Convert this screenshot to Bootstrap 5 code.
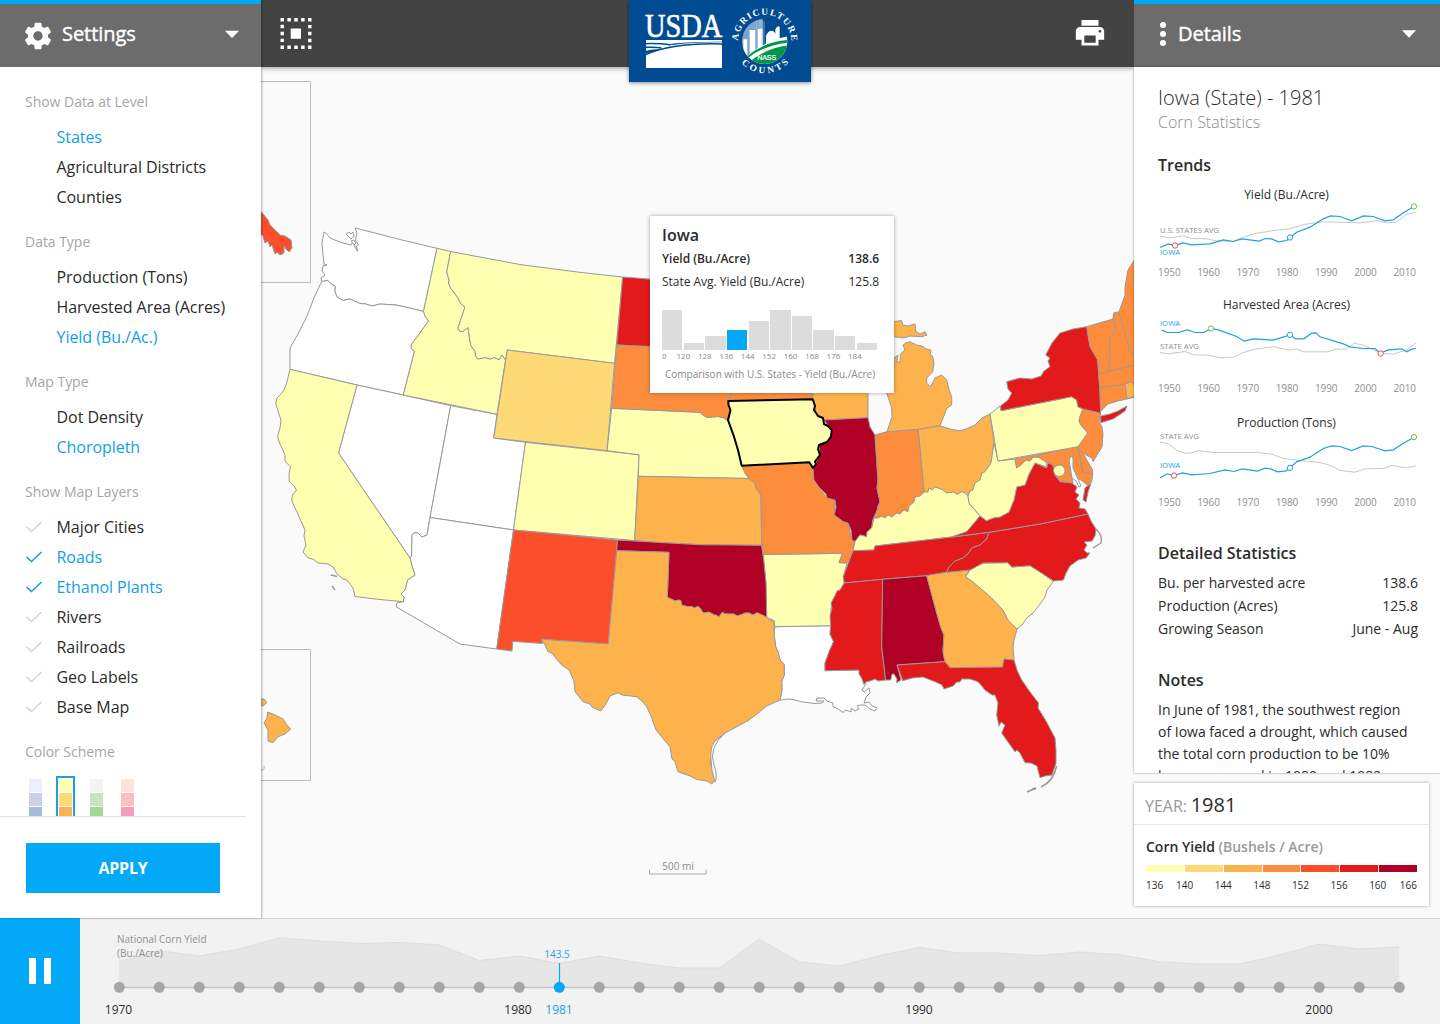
<!DOCTYPE html>
<html lang="en">
<head>
<meta charset="utf-8">
<title>USDA Corn Yield Explorer</title>
<link href="https://cdn.jsdelivr.net/npm/bootstrap@5.3.0/dist/css/bootstrap.min.css" rel="stylesheet">
<style>
:root{--sky:#03a9f6;--ink:#2b2b2b}
body{font-family:"Open Sans","Noto Sans",sans-serif;font-size:14px;color:var(--ink);background:#fafafa}
.app-shell{width:1440px;height:1024px}
.stage{height:918px}
.side-left{width:261px;z-index:3;box-shadow:1px 0 2px rgba(0,0,0,.3)}
.side-right{width:306px;z-index:3}
.panel-head{height:67px;background:#6c6c6c;border-top:4px solid var(--sky);color:#fff;font-size:20px;padding:0 22px}
.side-right .panel-head{padding:0 24px 0 26px}
.panel-title{line-height:30px;-webkit-text-stroke:.4px #fff;letter-spacing:-.05px}
.side-right .panel-title{margin-left:11px}
.left-body{padding:15px 0 0 25px;flex:1 1 0;min-height:0}
.opt-head{height:40px;line-height:40px;color:#a6a6a6;font-size:14px;letter-spacing:-.03px}
.opt-list{margin-bottom:10px}
.opt-list li{height:30px;line-height:30px;font-size:16px;letter-spacing:-.04px}
.opt-list .chk{width:31.5px}
.chk svg{display:block}
.is-on{color:#0fa0ec}
.swatches{gap:11.6px;padding:4px 0 0 1px}
.swatch{width:19px;height:60px;border:2px solid transparent;padding:1px;gap:1px}
.swatch.is-picked{border-color:#1b9fe0;margin:0 .6px 0 -.6px}
.swatch i{height:13px;flex:none}
.apply-wrap{width:246px;height:102px;border-top:1px solid #e2e2e2;padding:26px 26px 0}
.btn-apply{width:194px;height:50px;background:var(--sky);color:#fff;font-weight:700;font-size:16px;letter-spacing:-.2px;border-radius:0}
.topbar{height:67px;background:#434343;box-shadow:0 1px 5px rgba(0,0,0,.4);z-index:2;padding:0 27px 0 18.5px}
.brand{left:368px;top:0;width:182px;height:82px;background:#004b91;box-shadow:0 1px 4px rgba(0,0,0,.45)}
.map-pane{flex:1 1 0;min-height:0}
.map-svg{display:block}
.tip{left:388.5px;top:216px;width:244.500px;height:177px;background:#fff;box-shadow:0 0 4px rgba(0,0,0,.35);padding:7px 15px 0 12.5px;z-index:2;font-size:12px}
.tip-title{font-size:16px;font-weight:600;line-height:24px}
.tip-row{line-height:23px;letter-spacing:-.02px}
.bars{height:40px;margin-top:17px;gap:1.2px;width:215px}
.bars i{flex:1 1 0;background:#dcdcdc}
.bars i.hot{background:var(--sky)}
.bar-labels{font-size:8px;line-height:12px;color:#8a8a8a;width:214px}
.bar-labels span{width:21.45px;text-align:center}
.bar-labels span:first-child{width:10.7px;text-align:left}
.tip-note{font-size:10px;color:#8a8a8a;line-height:14px;margin-top:5px;padding-left:3px}
.right-card{height:706px;background:#fff;padding:18px 22px 0 24px;box-shadow:0 0 2px rgba(0,0,0,.45);overflow:hidden}
.det-title{font-size:20px;font-weight:300;line-height:26px}
.det-sub{font-size:16px;font-weight:300;line-height:22px;color:#8c8c8c;margin-bottom:20px}
.sec-head{font-size:16px;font-weight:600;line-height:24px}
.sec-gap{margin-top:29px;margin-bottom:6px}
.notes-gap{margin-top:28px;margin-bottom:7px}
.trend-title{font-size:12px;line-height:20px;text-align:center;padding-right:3px}
.trend svg{display:block;overflow:visible}
.trend-a{margin-top:7.5px}
.trend-b{margin-top:12.5px}
.trend-c{margin-top:14.5px}
.trend-axis{font-size:10px;line-height:20px;color:#8f8f8f;letter-spacing:-.08px;padding-right:2px}
.trend text{font-size:23.5px;letter-spacing:-.2px}
.stat-row{line-height:23px}
.note-copy{line-height:22px;white-space:nowrap;letter-spacing:-.01px}
.legend-card{width:295px;height:123px;margin:10px 0 0 0;background:#fff;box-shadow:0 0 3px rgba(0,0,0,.35)}
.yr-head{height:42px;border-bottom:1px solid #e6e6e6;padding-left:11px;line-height:44px}
.yr-head .tag{font-size:16px;color:#999}
.yr-head .num{font-size:20px}
.legend-body{padding:12px 12px 0 12px}
.legend-name{line-height:20px}
.legend-unit{color:#999}
.ramp{height:7px;gap:1px}
.ramp i{flex:1 1 0}
.ramp-labels{font-size:10px;line-height:16px;margin-top:5px}
.ramp-labels span{width:38.7px;text-align:center}
.ramp-labels span:first-child{width:19.4px;text-align:left}
.ramp-labels span:last-child{width:20px;text-align:right;direction:rtl}
.timeline{height:106px;background:#f2f2f2;z-index:1}
.tl-body{border-top:1px solid #d5d5d5;width:1360px}
.pause{width:80px;background:var(--sky);border:0;gap:7.5px;padding:0}
.pause i{width:7.5px;height:26px;background:#fff}
</style>
<script src="https://cdn.jsdelivr.net/npm/bootstrap@5.3.0/dist/js/bootstrap.bundle.min.js"></script>
</head>
<body>
<div class="app-shell d-flex flex-column overflow-hidden">
<div class="stage d-flex">

<aside class="side-left bg-white d-flex flex-column position-relative">
  <div class="panel-head d-flex align-items-center">
    <svg width="32" height="32" viewBox="0 0 24 24" fill="#fff"><path d="M19.43 12.98c.04-.32.07-.64.07-.98s-.03-.66-.07-.98l2.11-1.65c.19-.15.24-.42.12-.64l-2-3.46c-.12-.22-.39-.3-.61-.22l-2.49 1c-.52-.4-1.08-.73-1.69-.98l-.38-2.65C14.46 2.18 14.25 2 14 2h-4c-.25 0-.46.18-.49.42l-.38 2.65c-.61.25-1.17.59-1.69.98l-2.49-1c-.23-.09-.49 0-.61.22l-2 3.46c-.13.22-.07.49.12.64l2.11 1.65c-.04.32-.07.65-.07.98s.03.66.07.98l-2.11 1.65c-.19.15-.24.42-.12.64l2 3.46c.12.22.39.3.61.22l2.49-1c.52.4 1.08.73 1.69.98l.38 2.65c.03.24.24.42.49.42h4c.25 0 .46-.18.49-.42l.38-2.65c.61-.25 1.17-.59 1.69-.98l2.49 1c.23.09.49 0 .61-.22l2-3.46c.12-.22.07-.49-.12-.64l-2.11-1.65zM12 15.5c-1.93 0-3.5-1.57-3.5-3.5s1.57-3.5 3.5-3.5 3.5 1.57 3.5 3.5-1.57 3.5-3.5 3.5z"/></svg>
    <span class="panel-title ms-2 mb-1">Settings</span>
    <svg class="ms-auto mb-1" width="14" height="8" viewBox="0 0 14 8"><path d="M0 .8h14L7 8z" fill="#fff"/></svg>
  </div>
  <div class="left-body overflow-hidden">
    <div class="opt-head">Show Data at Level</div>
    <ul class="opt-list list-unstyled">
      <li class="d-flex is-on"><span class="chk"></span>States</li>
      <li class="d-flex"><span class="chk"></span>Agricultural Districts</li>
      <li class="d-flex"><span class="chk"></span>Counties</li>
    </ul>
    <div class="opt-head">Data Type</div>
    <ul class="opt-list list-unstyled">
      <li class="d-flex"><span class="chk"></span>Production (Tons)</li>
      <li class="d-flex"><span class="chk"></span>Harvested Area (Acres)</li>
      <li class="d-flex is-on"><span class="chk"></span>Yield (Bu./Ac.)</li>
    </ul>
    <div class="opt-head">Map Type</div>
    <ul class="opt-list list-unstyled">
      <li class="d-flex"><span class="chk"></span>Dot Density</li>
      <li class="d-flex is-on"><span class="chk"></span>Choropleth</li>
    </ul>
    <div class="opt-head">Show Map Layers</div>
    <ul class="opt-list list-unstyled" id="layers"></ul>
    <div class="opt-head">Color Scheme</div>
    <div class="swatches d-flex">
      <div class="swatch d-flex flex-column"><i style="background:#edf0fc"></i><i style="background:#ccd0e6"></i><i style="background:#a3bbd6"></i></div>
      <div class="swatch d-flex flex-column is-picked"><i style="background:#ffffb2"></i><i style="background:#fed976"></i><i style="background:#feb24c"></i></div>
      <div class="swatch d-flex flex-column"><i style="background:#edf7ea"></i><i style="background:#c3e6bd"></i><i style="background:#9fd899"></i></div>
      <div class="swatch d-flex flex-column"><i style="background:#fde4da"></i><i style="background:#fabfbf"></i><i style="background:#f79db6"></i></div>
    </div>
  </div>
  <div class="apply-wrap"><button class="btn btn-apply p-0">APPLY</button></div>
</aside>

<main class="d-flex flex-column flex-grow-1 position-relative">
  <div class="topbar d-flex align-items-center position-relative">
    <svg width="32" height="32" viewBox="0 0 32 32"><path d="M2.200 1.700h27.600v27.600H2.200z" fill="none" stroke="#fff" stroke-width="3.400" stroke-dasharray="3.450" stroke-dashoffset="1.720"/><path d="M10.700 10.500h10.300v10.300H10.700z" fill="#fff"/></svg>
    <svg class="ms-auto mb-1" width="34" height="34" viewBox="0 0 24 24" fill="#fff"><path d="M19 8.500H5c-1.66 0-3 1.34-3 3v6h4v4h12v-4h4v-6c0-1.66-1.34-3-3-3zm-3 11H8v-5h8v5zm3-7c-.55 0-1-.45-1-1s.45-1 1-1 1 .45 1 1-.45 1-1 1zm-1-9H6v4h12V3.500z"/></svg>
    <div class="brand position-absolute">
      <svg class="d-block" width="182" height="82" viewBox="87 0 546 246">
        <defs><path id="arcTop" d="M414 124a80 80 0 0 1 160 0"/><path id="arcBot" d="M398 124a96 96 0 0 0 192 0"/><clipPath id="disc"><circle cx="494" cy="124" r="68"/></clipPath></defs>
        <text x="135" y="110" font-family="Liberation Serif" font-size="104" fill="#fff" stroke="#fff" stroke-width="2" textLength="232" lengthAdjust="spacingAndGlyphs">USDA</text>
        <path d="M138 120h228v84H138z" fill="#fff"/>
        <path d="M138 131q44-1 74 4M138 142q24-1 46 1M138 164q80-36 228-32" fill="none" stroke="#004b91" stroke-width="4.500"/>
        <path d="M138 152q24-5 46-4l-46 13zM200 133q60-9 166-8v2q-90-1-146 8z" fill="#004b91"/>
        <g clip-path="url(#disc)">
          <path d="M426 56h136v136H426z" fill="#004b91"/>
          <path d="M426 56h62v136h-62z" fill="#7ea3cc"/>
          <path d="M430 118h12v60h-12zM449 90h17v90h-17zM473 86h15v80h-15zM498 108q4-14 16-16q10 1 12 10v-14q6-12 13-8v56l-41 10z" fill="#fff"/>
          <path d="M486 60v80M492 64v70M480 60v26M470 64v22" stroke="#b5cbe2" stroke-width="2"/>
          <path d="M430 178q60-56 140-70v90H430z" fill="#fff"/>
          <path d="M440 170q50-44 122-50v8q-70 8-118 46zM452 182q46-36 112-46v60H452z" fill="#00964b"/>
          <text x="500" y="181" font-family="Liberation Sans" font-size="21" fill="#fff" stroke="#fff" stroke-width=".6" text-anchor="middle">NASS</text>
        </g>
        <g font-family="Liberation Serif" font-weight="700" font-size="28" fill="#fff">
          <text><textPath href="#arcTop" startOffset="2" textLength="248">AGRICULTURE</textPath></text>
          <text><textPath href="#arcBot" startOffset="72" textLength="160">COUNTS</textPath></text>
        </g>
      </svg>
    </div>
  </div>
  <div class="map-pane">
    <svg class="map-svg" width="873" height="851" viewBox="261 67 873 851" stroke="#999" stroke-width="1" stroke-linejoin="round" id="map">
      <g fill="none" stroke="#bbb"><path d="M250 81.500H310.500V282.500H250M250 649.500H310.500V780.500H250"/><path d="M261 770q4 1 3-4" /></g>
      <path fill="#fc4e2a" d="M258 208L264 215 268 220 270 225 275 230 280 235 285 236 291 240 292 248 289 252 286 249 284 246 284 253 280 255 277 252 275 254 272 245 270 247 268 241 265 243 263 236 258 232z"/>
      <g fill="#feb24c"><path d="M267.700 712L275 715 283 719 287 725 290.700 729 285 734 278 736.700 273 742.700 268 741 268 730 264 723 267 718z"/><path d="M259 699L264 699 266.700 702.700 263 706 259 705z"/></g>
      <!-- West -->
      <g fill="#fff">
        <path d="M324 232L326 233 330 238 341 242.500 351 245 353 242 355 247 357.500 251.500 356.500 246 358.500 245 355.500 240 357 233 355 228 375 233 400 239.500 437 248.300 423.500 311.500 410 308 396 305 380 304 372 306 366 304 360 303.500 350 299 343 300.500 337 297 335 292 335 286 331 284 328 280.500 322 281.500 321 278 325 275 322 271 323 266 327 265 324 264 323 255 322 243 323 237z"/>
        <path d="M346 234L349 232 351 234 353 232 354 236 351 239 349 237zM351 241L354 240 356 243 354 245z"/>
        <path d="M322 281.500L328 280.500 331 284 335 286 335 292 337 297 343 300.500 350 299 360 303.500 366 304 372 306 380 304 396 305 410 308 423.500 311.500 425 316 428.500 321 422 330 417 337 411 345 411.500 349 414.500 351 403.300 395 357 385 290 369.300 290 348 298 334 307 316 314 298 320 285z"/>
        <path d="M357 385L403.300 395 450.700 405.700 430 517.500 427 535 422 537 418 533 414 532.700 412 535 411.500 556 410 558 338.500 453z"/>
        <path d="M450.700 405.700L497 414.300 493.700 438 525.500 442.300 513.500 530 430 517.500z"/>
        <path d="M430 517.500L513.500 530 496.700 649 460 644 396 606.700 397 603 403.300 601.700 404 597 401 594 405 590 407.500 580 415 575 412 566 410 558 411.500 556 412 535 414 532.700 418 533 422 537 427 535z"/>
        <path d="M775 626.700L830.700 625.700 830 634 833.500 641.700 829 652 825 663 825 670.700 859 670 861.700 678 866 684 862 690 864 692 869 688 870 693 866 697 864 703 869 702 872 706 877 708 875 711 870 709 865 705 860 705 857 706 859 709 855 711 851 708 851 712 846 710 843 712.500 838 709 833 706.700 833 703 827 701 824 698 817 698 816 701 824 701 822 703 815 703.500 803 702 790 699 780 700 782 690 781.700 681.700 784.300 675 784.300 665 780 660 775.700 646.700 774 634z"/>
      </g>
      <g fill="#ffffb2">
        <path d="M437 248.300L450.700 251.500 446.700 272 449 280 448.500 283 450.500 288 453 291 458 298 461 304 465 307 458 328 460 331.500 463 331.500 468 327.500 469.500 338 471 346 475 351 475.500 356 478 359 485 357.500 490 359 494 357.500 499 359.500 502 355 505.500 360 497 414.300 403.300 395 414.500 351 411.500 349 411 345 417 337 422 330 428.500 321 425 316 423.500 311.500z"/>
        <path d="M450.700 251.500L485 258 520 264.500 560 269.800 590 273.500 622.700 277 614.500 363.300 507.300 350 505.500 360 502 355 499 359.500 494 357.500 490 359 485 357.500 478 359 475.500 356 475 351 471 346 469.500 338 468 327.500 463 331.500 460 331.500 458 328 465 307 461 304 458 298 453 291 450.500 288 448.500 283 449 280 446.700 272z"/>
        <path d="M290 369.300L357 385 338.500 453 410 558 412 566 415 575 407.500 580 405 590 401 594 404 597 403.300 601.700 380 599.500 355 596.500 353 588 347 580 343 579 337 574 333 567 328 564 318 563 313 559 308 558 303 552 306 545 304 536 305 530 300 519 297 512 294 506 291.700 500 292.500 495 296.500 490 294 486 289.300 481.700 289 474 290.500 467 285 461 285 455 280 444 277.500 436.700 280 428 281 420 278 411 275.700 403.300 277 398 280 395 284 390 286.700 383z"/>
        <path d="M525.500 442.300L639 454.700 634.700 540.500 513.500 530z"/>
        <path d="M611.700 408.300L660 410.500 700 412.300 703 415 706.700 417.500 718 416.500 724 418 728 421 734 436.700 738 450 741.700 465.700 745 473 749 478.500 638.300 476.300 639 454.700 607 450.700z"/>
        <path d="M763.500 554.500L842.700 553.300 839 562.700 847 563 843.300 576.700 844.300 583 840 590 834.300 597 831 608 830.700 625.700 775 626.700 774 620.700 766.700 617.300 766 583 764 563z"/>
      </g>
      <path d="M331 575l6 1.500M332 586l3 4" fill="none" stroke-width="1.400"/>
      <path fill="#fed976" d="M507.300 350L614.500 363.300 607 450.700 493.700 438z"/>
      <path fill="#fc4e2a" d="M513.500 530L617.500 540 616.700 550.700 608.300 644 541.700 639.300 542.500 643.500 512.700 641.300 512 651 496.700 649z"/>
      <!-- Plains -->
      <path fill="#e31a1c" d="M622.700 277L700 283V350L616.700 345z"/>
      <path fill="#fd8d3c" d="M616.700 345L731 350 731.700 393 728.300 401 730.500 410 728 421 724 418 718 416.500 706.700 417.500 703 415 700 412.300 660 410.500 611.700 408.300z"/>
      <path fill="#fd8d3c" d="M731.700 350H812V399.300L728.300 401 731.700 393z"/>
      <path fill="#feb24c" d="M638.300 476.300L749 478.500 755 483 756 488 761 495 761.700 545.300 700 544.700 660 542.500 634.700 540.500z"/>
      <path fill="#b10026" d="M617.500 540L660 542.500 700 544.700 761.700 545.300 764 563 766 583 766.700 617.300 762 615 757 612.700 753 615 749 613 745 613 742 614.500 737 616 734 614 730 614 726 614 722 612.500 719 617 716 615 714 615 711 613 708 612 705 613 703 612.500 700 608 698 606.500 694 608 692 606.500 687 606.500 681.700 605 681 601 679 600 675 601 672 599.500 667.300 597.300 669 552.300 616.700 550.700z"/>
      <path fill="#feb24c" d="M616.700 550.700L669 552.300 667.300 597.300 672 599.500 675 601 679 600 681 601 681.700 605 687 606.500 692 606.500 694 608 698 606.500 700 608 703 612.500 705 613 708 612 711 613 714 615 716 615 719 617 722 612.500 726 614 734 614 737 616 742 614.500 745 613 749 613 753 615 757 612.700 762 615 766.700 617.300 769 620 774 620.700 774 634 775.700 646.700 778 651 780 660 784.300 665 784.300 675 781.700 681.700 782 690 780 700 766.700 706 757 714 748 720.700 725 733 713.500 742 710.500 763 715 780 711.700 784 707 781 696.700 779.500 690 776 678 771.700 675 761.700 672 759 671 753 670 746.700 666.700 743 661 736 656 730 651 716 646.700 706.700 642 701 636.700 696.700 622 695 618 692.700 610 696 606 704 600.700 711 592 707 590 704 583 701.700 575 691.700 574 681 569 670 561.700 665 554 656 552 653 548 651.700 545 645 541.700 639.300 608.300 644z"/>
      <path d="M725 733Q708 748 714 765Q718 777 715 782Q711 770 711 760Q710 748 714 742z" fill="#fafafa"/>
      <path fill="#fd8d3c" d="M741.700 465.700L809.300 462.300 813 468 814 480 819 487 827 498 835 500 834.300 515 848 523 852 540 855 541.700 853 550.700 849 560 846.700 563 839 562.700 842.700 553.300 763.500 554.500 761.700 545.300 761 495 756 488 755 483 749 478.500 745 473z"/>
      <path fill="#feb24c" d="M812 380H868V400L868 417.700 824 420 815.700 413 812.700 399.300z"/>
      <path fill="#b10026" d="M824 420L868 417.700 870 427 875 435 878 480 877 488 880 501.700 878 506 877 511 874 516.700 872.500 521 871.700 528 867 532 866.700 536.700 860 535 855 541.700 852 540 851 530 848 523 843 521.500 834.300 515 836 507 835 500 827 498 826 494 819 487 814 480 813 468 820 455 819 445 828 440 831.700 430z"/>
      <path fill="#fd8d3c" d="M875 435L887 431.700 918.300 429.300 924.300 492 920 496 915 497 914 502 909 506 908 511.700 904 510 900 514 896.700 513 892 517 888 515 885 518 882 516 878 518 874 518 877 511 880 501.700 877 488 878 480z"/>
      <path fill="#feb24c" d="M880 321L894 321.700 901.700 320.500 902.700 325 908 326 915 324 916 331.700 920 334 925 331.700 927 335 921.700 336.700 910 336 903 338 894 336.700 880 338z"/>
      <path fill="#feb24c" d="M903 345L906 343 910 341.700 916.700 345 923 346.500 926 349 931 350 930 354 932.500 356 934 363 932.700 371.700 926.700 378 926.700 383 930 386.700 932 384 935 378 941.700 375 946.700 380 949 390 951.700 396.700 951.700 405 947 408 943 418 940 425.700 918.300 429.300 887 431.700 892 416.700 891.700 408 886.700 393 890 377 894 366 894 358 898 355 897 362 900 362 900.500 354 905 350z"/>
      <path fill="#feb24c" d="M918.300 429.300L940 425.700 944 427 950 429 960 431 966 429 975 425 982 418 990 414 994 441.700 992.700 455 991 463 985 471.700 982 473 980 480 975 483 973 490 970 491 968 496 965 493 961.700 491.700 957 494.500 954 492 946.700 493 941 489 935 487 932 490 929 488 928 492 924.300 493z"/>
      <path fill="#ffffb2" d="M924.300 492L928 492 929 488 932 490 935 487 941 489 946.700 493 954 492 957 494.500 961.700 491.700 965 493 968 496 969 503 975 510 980 516 973 526 966.700 531.700 951.700 537 875 546 874 550 853 550.700 855 541.700 860 535 866.700 536.700 867 532 871.700 528 874 518 878 518 882 516 885 518 888 515 892 517 896.700 513 900 514 904 510 908 511.700 909 506 914 502 915 497 920 496z"/>
      <path fill="#e31a1c" d="M853 550.700L874 550 875 546 951.700 537 989 532.300 986.700 539 980 545 977 546 971.700 548 968 554 963 558 955 561 949 567 946.700 572.300 926.700 575.700 882.700 579.300 844.300 583 843.300 576.700 848.300 563z"/>
      <path fill="#e31a1c" d="M844.300 583L882.700 579.300 881.700 646.700 885.700 680 878 681 875 679 870 681 866 682 864 684.500 861.700 678 859 674 859 670 825 670.700 825 663 829 652 833.500 641.700 830 634 830.700 625.700 830 616 832 608 831 603 834.300 597 837 591 840 590z"/>
      <path fill="#b10026" d="M882.700 579.300L926.700 575.700 936.700 613 941 628 944 635 943 651.700 945 661.700 897 665 901 680 896.700 682.700 897 679 894 674 892 674 890.700 680 885.700 680 881.700 646.700z"/>
      <path fill="#feb24c" d="M926.700 575.700L946.700 572.300 970 570 965.700 576.700 973 582 980 588 991.700 598 1003 610 1008 620 1017 629 1014 640 1013 646.700 1014 660 1004 659 1002.500 667.700 950 667.700 945 661.700 943 651.700 944 635 941 628 936.700 613z"/>
      <path fill="#e31a1c" d="M897 665L945 661.700 950 667.700 1002.500 667 1004 659 1014 660 1017 670 1021.700 680 1030 692 1038.500 703 1038 708 1046 721 1055 738 1056 750 1056 763 1052 775 1045 776 1040 777.700 1037 766 1031 763 1025 762.700 1020 753 1017 750 1015 751.700 1008 742 1001.700 733 1005 725 1001 722 999 726 996.700 715 998 703 995 695 992 695 985 690 981 685 978 681.700 970 679 961.700 679 960 682 956.700 682 953 686 944 689 942 685 935 681.700 923 677 912 678 902.700 680.700z"/>
      <path d="M1056.500 766Q1054 781 1041 787M1027 792L1036 788" fill="none" stroke-width="1.600"/>
      <path d="M1031 790l3-2 2 1z" fill="#e31a1c"/>
      <path fill="#ffffb2" d="M970 570L983 563 1008 562.700 1011.700 567 1030 565.700 1040 572 1053.500 581 1047 590 1045 597 1037 608 1032 614 1026.700 618 1022 625 1017 629 1008 620 1003 610 991.700 598 980 588 973 582 965.700 576.700z"/>
      <path fill="#e31a1c" d="M946.700 572.300L949 567 955 561 963 558 968 554 971.700 548 977 546 980 545 986.700 539 989 532.300 1040 524 1088 514 1091 521 1096 529 1095 536 1092 541 1084 542 1087 545 1084 550 1087 553 1090 553 1086 558 1078 560 1070 566 1066 573 1063.500 580 1053.500 581 1040 572 1030 565.700 1011.700 567 1008 562.700 983 563 970 570z"/>
      <path d="M1096 529Q1103 536 1101 543L1093 548" fill="none" stroke-width="1.400"/>
      <path fill="#e31a1c" d="M951.700 537L966.700 531.700 980 516 986.700 520.700 993 518 1000 517 1009 512 1012 503 1014 500 1016.700 487 1025 485 1029 474 1035 463 1046.700 468 1048 463 1053 465 1055 475 1060 481.700 1072 483 1077 487 1075 492 1079 495 1076 499 1080 503 1079 508 1085 509 1088 514 1040 524 989 532.300z"/>
      <path fill="#e31a1c" d="M1091 483L1088 492 1086 502 1083 500 1085 488z"/>
      <path fill="#ffffb2" d="M994 443L998 461 1015 459 1016.700 468 1022 464 1026 460 1030 461 1033 457 1038 457 1046 461.700 1046.700 467 1035 463 1029 474 1025 485 1016.700 487 1014 500 1009 512 1000 517 993 518 986.700 520.700 980 516 975 510 969 503 968 496 970 491 973 490 975 483 980 480 982 473 985 471.700 991 463z"/>
      <path fill="#fd8d3c" d="M1015 459L1078 446.700 1082.700 472 1092.700 474 1091.700 482 1087 485 1081 480 1076 478 1072 470 1073 457 1069 465 1073 483 1060 481 1055 475 1053 465 1046 461.700 1038 457 1033 457 1030 461 1026 460 1022 464 1016.700 468z"/>
      <path d="M1071 456L1073 458 1073 468 1078 479 1081 486 1079 487 1076 481 1072 478 1070 466 1069 460z" fill="#fafafa"/>
      <path fill="#fd8d3c" d="M1078 446.700L1083 453 1088 462 1092.500 470 1092.700 474 1082.700 472z"/>
      <circle cx="1059.300" cy="470.700" r="5.700" fill="#ffffb2"/>
      <path fill="#ffffb2" d="M990 414L1000 406 1001 410.700 1071.700 396.700 1076.700 400 1078 406.700 1083 409 1080 416.700 1079 421 1081 425 1087.700 433 1083 440 1078 446.700 998 461z"/>
      <path fill="#e31a1c" d="M1001 410.700L1000.500 406 1008 400 1011.700 393 1008 389 1006.700 381.700 1020 378 1032 379 1041 376 1044 371 1050 366.700 1048 361 1050 358 1045.700 355 1052 343 1060 333 1073 329 1086.700 326.700 1090 346.700 1097.700 360 1100 393 1100.700 415 1083 409 1078 406.700 1076.700 400 1071.700 396.700z"/>
      <path fill="#e31a1c" d="M1100.700 416L1110 414 1118 411 1127 406 1125 411 1113 419 1100.700 422.700z"/>
      <path fill="#fd8d3c" d="M1083 409L1100 413 1099 422 1102 427 1103 434 1102 447 1093 461.700 1092 458 1086 455 1078 449 1078 446.700 1083 440 1087.700 433 1081 425 1079 421 1080 416.700z"/>
      <path fill="#fd8d3c" d="M1086.700 326.700L1113 319 1113.500 313 1119 311.700 1125 295 1125 286.700 1128 270 1135 259V397L1118 401 1108 404 1100.700 411 1100 393 1097.700 360 1090 346.700z"/>
      <path fill="#feb24c" d="M1125 384L1131 382 1135 386V396L1127 399z"/>
      <path fill="none" d="M1113.500 319L1116 330 1110 338 1109 372M1119 312L1130 352 1136 358M1098 374L1126 367 1135 365M1099 388L1125 384"/>
      <path fill="#ffffb2" stroke="#000" stroke-width="2" d="M728.300 401L812.700 399.300 814 403 815 406 814 410 818 416 823 418 824 424 828 426 831.700 430 831 436.700 827 442 819 445 818 449 820 455 815 461.700 816 464 813 468 809.300 462.300 741.700 465.700 738 450 734 436.700 728 420 730.500 410 728.500 405z"/>
      <path d="M649.500 869.500V874H706V869.500" fill="none" stroke="#aaa"/>
      <text x="678" y="870" text-anchor="middle" font-size="10" fill="#8a8a8a" stroke="none">500 mi</text>
    </svg>
  </div>
  <div class="tip position-absolute">
    <div class="tip-title">Iowa</div>
    <div class="tip-row d-flex justify-content-between fw-semibold"><span>Yield (Bu./Acre)</span><span>138.6</span></div>
    <div class="tip-row d-flex justify-content-between"><span>State Avg. Yield (Bu./Acre)</span><span>125.8</span></div>
    <div class="bars d-flex align-items-end">
      <i style="height:40px"></i><i style="height:7px"></i><i style="height:14px"></i><i class="hot" style="height:20px"></i><i style="height:29px"></i><i style="height:40px"></i><i style="height:34px"></i><i style="height:20px"></i><i style="height:14px"></i><i style="height:7px"></i>
    </div>
    <div class="bar-labels d-flex"><span>0</span><span>120</span><span>128</span><span>136</span><span>144</span><span>152</span><span>160</span><span>168</span><span>176</span><span>184</span></div>
    <div class="tip-note text-nowrap">Comparison with U.S. States - Yield (Bu./Acre)</div>
  </div>
</main>

<aside class="side-right position-relative">
  <div class="panel-head d-flex align-items-center">
    <svg class="mb-1" width="7" height="24" viewBox="0 0 7 24" fill="#fff"><circle cx="3" cy="3" r="3"/><circle cx="3" cy="12" r="3"/><circle cx="3" cy="21" r="3"/></svg>
    <span class="panel-title mb-1">Details</span>
    <svg class="ms-auto mb-1" width="14" height="8" viewBox="0 0 14 8"><path d="M0 .3h14L7 7.700z" fill="#fff"/></svg>
  </div>
  <div class="right-card">
    <div class="det-title">Iowa (State) - 1981</div>
    <div class="det-sub">Corn Statistics</div>
    <div class="sec-head">Trends</div>
    <div class="trend trend-a">
      <div class="trend-title">Yield (Bu./Acre)</div>
      <svg width="260" height="57.500" viewBox="294 613.500 780 172.500" fill="none" stroke-width="3">
        <path stroke="#c8c8c8" d="M300 707L330 712 370 706 395 714 440 715 470 721 520 723 545 712 590 698 650 689 690 685 730 672 790 664 900 667 950 660 980 667 1010 665 1040 642 1065 635"/>
        <path stroke="#1f9fe6" stroke-width="3.600" d="M300 741L325 730 345 735 368 727 395 733 450 730 490 718 520 723 545 715 598 722 615 714 635 715 655 724 680 720 690 711 710 695 750 680 790 655 812 646 840 648 875 661 910 646 940 648 975 661 1000 658 1030 637 1062 618"/>
        <g fill="#fff" stroke-width="3"><circle cx="345" cy="735" r="8" stroke="#e5504a"/><circle cx="690" cy="711" r="8" stroke="#1f9fe6"/><circle cx="1062" cy="618" r="8" stroke="#77bb4b"/></g>
        <text x="300" y="698" fill="#909090">U.S. STATES AVG</text><text x="300" y="764" fill="#1f9fe6">IOWA</text>
      </svg>
      <div class="trend-axis d-flex justify-content-between"><span>1950</span><span>1960</span><span>1970</span><span>1980</span><span>1990</span><span>2000</span><span>2010</span></div>
    </div>
    <div class="trend trend-b">
      <div class="trend-title ">Harvested Area (Acres)</div>
      <svg width="260" height="63.500" viewBox="84 73.500 780 190.500" fill="none" stroke-width="3">
        <path stroke="#c8c8c8" d="M90 186L115 190 165 183 190 193 235 194 270 202 310 200 335 188 370 177 430 168 475 179 500 175 520 184 590 184 620 176 650 176 672 158 700 164 730 178 752 188 790 191 830 178 858 158"/>
        <path stroke="#1f9fe6" stroke-width="3.600" d="M95 119L112 126 145 126 172 118 195 126 222 126 243 114 265 118 320 138 342 152 370 145 430 149 480 133 497 145 522 145 545 128 558 127 570 139 640 160 660 169 700 174 735 174 752 188 775 178 815 175 830 184 845 176 858 174"/>
        <g fill="#fff" stroke-width="3"><circle cx="243" cy="114" r="8" stroke="#77bb4b"/><circle cx="480" cy="133" r="8" stroke="#1f9fe6"/><circle cx="752" cy="189" r="8" stroke="#e5504a"/></g>
        <text x="90" y="106" fill="#1f9fe6">IOWA</text><text x="90" y="175" fill="#909090">STATE AVG</text>
      </svg>
      <div class="trend-axis d-flex justify-content-between"><span>1950</span><span>1960</span><span>1970</span><span>1980</span><span>1990</span><span>2000</span><span>2010</span></div>
    </div>
    <div class="trend trend-c">
      <div class="trend-title">Production (Tons)</div>
      <svg width="260" height="59.500" viewBox="84 427.500 780 178.500" fill="none" stroke-width="3">
        <path stroke="#c8c8c8" d="M90 455L115 459 140 480 165 488 185 487 205 480 250 486 380 486 425 491 460 504 510 510 570 516 605 526 630 540 675 545 705 535 760 534 785 525 830 532 858 526"/>
        <path stroke="#1f9fe6" stroke-width="3.600" d="M90 562L112 550 132 555 158 547 185 553 240 549 285 538 312 543 337 535 382 542 405 533 422 535 443 544 468 541 480 532 500 514 540 500 580 474 605 466 630 468 665 480 700 466 725 468 765 481 790 478 815 461 852 440"/>
        <g fill="#fff" stroke-width="3"><circle cx="132" cy="555" r="8" stroke="#e5504a"/><circle cx="480" cy="532" r="8" stroke="#1f9fe6"/><circle cx="852" cy="440" r="8" stroke="#77bb4b"/></g>
        <text x="90" y="446" fill="#909090">STATE AVG</text><text x="90" y="533" fill="#1f9fe6">IOWA</text>
      </svg>
      <div class="trend-axis d-flex justify-content-between"><span>1950</span><span>1960</span><span>1970</span><span>1980</span><span>1990</span><span>2000</span><span>2010</span></div>
    </div>
    <div class="sec-head sec-gap">Detailed Statistics</div>
    <div>
      <div class="stat-row d-flex justify-content-between"><span>Bu. per harvested acre</span><span>138.6</span></div>
      <div class="stat-row d-flex justify-content-between"><span>Production (Acres)</span><span>125.8</span></div>
      <div class="stat-row d-flex justify-content-between"><span>Growing Season</span><span>June - Aug</span></div>
    </div>
    <div class="sec-head notes-gap pt-px">Notes</div>
    <div class="note-copy">In June of 1981, the southwest region<br>of Iowa faced a drought, which caused<br>the total corn production to be 10%<br>lower compared to 1980 and 1982.</div>
  </div>
  <div class="legend-card">
    <div class="yr-head"><span class="tag">YEAR:</span> <span class="num">1981</span></div>
    <div class="legend-body">
      <div class="fw-semibold legend-name">Corn Yield <span class="legend-unit">(Bushels / Acre)</span></div>
      <div class="ramp d-flex mt-2"><i style="background:#ffffb2"></i><i style="background:#fed976"></i><i style="background:#feb24c"></i><i style="background:#fd8d3c"></i><i style="background:#fc4e2a"></i><i style="background:#e31a1c"></i><i style="background:#b10026"></i></div>
      <div class="ramp-labels d-flex"><span>136</span><span>140</span><span>144</span><span>148</span><span>152</span><span>156</span><span>160</span><span>166</span></div>
    </div>
  </div>
</aside>
</div>

<footer class="timeline d-flex">
  <button class="pause d-flex align-items-center justify-content-center" aria-label="Pause"><i></i><i></i></button>
  <div class="tl-body">
    <svg class="d-block" width="1360" height="105" viewBox="80 919 1360 105" id="tl"></svg>
  </div>
</footer>
</div>
<script>
const layers=[['Major Cities',0],['Roads',1],['Ethanol Plants',1],['Rivers',0],['Railroads',0],['Geo Labels',0],['Base Map',0]];
document.getElementById('layers').innerHTML=layers.map(([n,on])=>
 `<li class="d-flex align-items-center ${on?'is-on':''}"><span class="chk"><svg width="18" height="14" viewBox="0 0 18 14"><path d="M1.500 7L6.500 11.500 16.500 2" fill="none" stroke="${on?'#189fe6':'#d4d4d4'}" stroke-width="1.600"/></svg></span>${n}</li>`).join('');
const ys=[961.7,950.7,956,949,938,941,943.5,942.5,945,960.5,956,963.5,956,963,968,968,939,962,966,955.7,947.5,953,953,955.7,952,954.7,961.7,964,964,955,944,949,947];
const x=i=>119.3+40*i;
const line=ys.map((y,i)=>x(i)+','+y).join(' ');
let s=`<polygon points="${x(0)},987 ${line} ${x(32)},987" fill="#e6e6e6"/><polyline points="${line}" fill="none" stroke="#dedede"/><path d="M119 987.500H1399" stroke="#c6c6c6" stroke-width="1.300"/><path d="M559.500 963V985" stroke="#03a9f6" stroke-width="1.200"/>`;
ys.forEach((y,i)=>s+=`<circle cx="${x(i)}" cy="987.300" r="5.500" fill="${i==11?'#03a9f6':'#a6a6a6'}"/>`);
[[118.5,1970],[518,1980],[559,1981],[919,1990],[1319,2000]].forEach(([p,t])=>s+=`<text x="${p}" y="1014" font-size="12" text-anchor="middle" fill="${t==1981?'#189fe6':'#2b2b2b'}">${t}</text>`);
s+=`<text x="117" y="943" font-size="10" fill="#8f8f8f">National Corn Yield</text><text x="117" y="957" font-size="10" fill="#8f8f8f">(Bu./Acre)</text><text x="557" y="958" font-size="10" text-anchor="middle" fill="#189fe6">143.5</text>`;
document.getElementById('tl').innerHTML=s;
</script>
</body>
</html>
